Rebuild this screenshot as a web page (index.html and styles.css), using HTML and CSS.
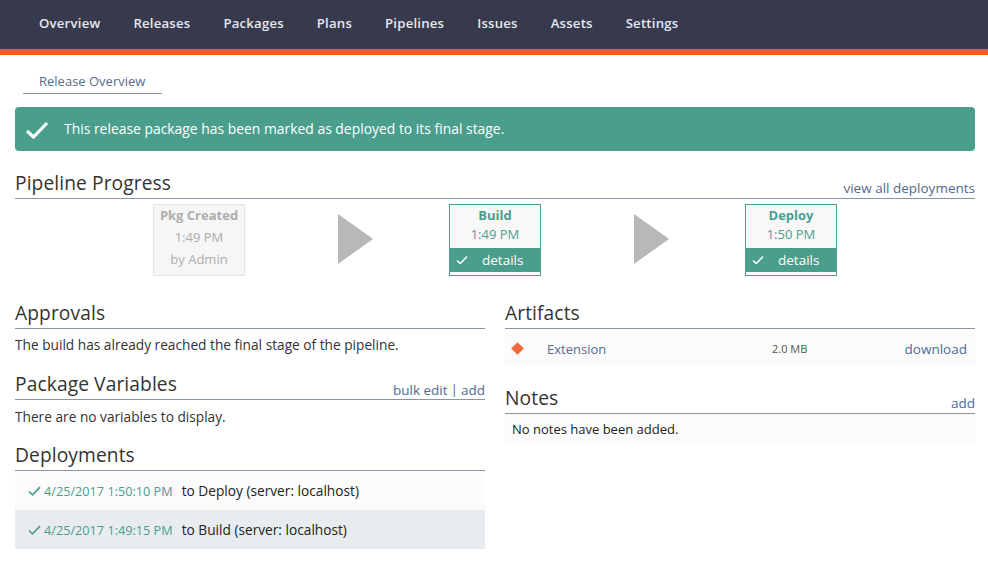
FILE: index.html
```html
<!DOCTYPE html>
<html>
<head>
<meta charset="utf-8">
<link rel="stylesheet" href="styles.css">
</head>
<body>
<header class="topnav">
  <nav class="navlinks">
    <a>Overview</a><a>Releases</a><a>Packages</a><a>Plans</a><a>Pipelines</a><a>Issues</a><a>Assets</a><a>Settings</a>
  </nav>
</header>
<div class="accent"></div>
<main class="page">
  <div class="tabs"><span class="tab">Release Overview</span></div>
  <div class="alert">
    <svg class="alert-check" width="24" height="20" viewBox="0 0 24 20"><path d="M2 11 L8.5 17 L22 3" fill="none" stroke="#fff" stroke-width="3.2"/></svg>
    <span>This release package has been marked as deployed to its final stage.</span>
  </div>

  <section class="sec">
    <div class="sec-head"><h2>Pipeline Progress</h2><a class="link">view all deployments</a></div>
    <div class="pipeline">
      <div class="stage stage-off">
        <div class="st-title">Pkg Created</div>
        <div class="st-line">1:49 PM</div>
        <div class="st-line">by Admin</div>
      </div>
      <div class="arrow"></div>
      <div class="stage stage-on">
        <div class="st-title">Build</div>
        <div class="st-time">1:49 PM</div>
        <div class="st-details"><svg width="12" height="10" viewBox="0 0 12 10"><path d="M1 5.5 L4.3 8.5 L11 1.5" fill="none" stroke="#fff" stroke-width="1.6"/></svg><span>details</span></div>
      </div>
      <div class="arrow"></div>
      <div class="stage stage-on">
        <div class="st-title">Deploy</div>
        <div class="st-time">1:50 PM</div>
        <div class="st-details"><svg width="12" height="10" viewBox="0 0 12 10"><path d="M1 5.5 L4.3 8.5 L11 1.5" fill="none" stroke="#fff" stroke-width="1.6"/></svg><span>details</span></div>
      </div>
    </div>
  </section>

  <div class="cols">
    <div class="col">
      <section class="sec">
        <div class="sec-head"><h2>Approvals</h2></div>
        <p class="msg">The build has already reached the final stage of the pipeline.</p>
      </section>
      <section class="sec">
        <div class="sec-head"><h2>Package Variables</h2><span class="links"><a class="link">bulk edit</a><span class="sep">|</span><a class="link">add</a></span></div>
        <p class="msg">There are no variables to display.</p>
      </section>
      <section class="sec">
        <div class="sec-head"><h2>Deployments</h2></div>
        <div class="deploy-row">
          <svg width="13" height="10" viewBox="0 0 13 10"><path d="M1 5.5 L4.5 8.8 L12 1.2" fill="none" stroke="#4a9e8c" stroke-width="1.7"/></svg>
          <span class="dep-date">4/25/2017 1:50:10 PM</span><span class="dep-text">to Deploy (server: localhost)</span>
        </div>
        <div class="deploy-row alt">
          <svg width="13" height="10" viewBox="0 0 13 10"><path d="M1 5.5 L4.5 8.8 L12 1.2" fill="none" stroke="#4a9e8c" stroke-width="1.7"/></svg>
          <span class="dep-date">4/25/2017 1:49:15 PM</span><span class="dep-text">to Build (server: localhost)</span>
        </div>
      </section>
    </div>
    <div class="col">
      <section class="sec">
        <div class="sec-head"><h2>Artifacts</h2></div>
        <div class="artifact">
          <span class="diamond"></span>
          <span class="art-name">Extension</span>
          <span class="art-size">2.0 MB</span>
          <a class="link art-dl">download</a>
        </div>
      </section>
      <section class="sec notes">
        <div class="sec-head"><h2>Notes</h2><a class="link">add</a></div>
        <div class="note-row">No notes have been added.</div>
      </section>
    </div>
  </div>
</main>
</body>
</html>
```
FILE: styles.css
```css
* { box-sizing: border-box; }
html, body { margin: 0; padding: 0; background: #fff; }
body { font-family: "Open Sans", "Liberation Sans", sans-serif; color: #333; font-size: 13px; }
a { cursor: pointer; }

.topnav { height: 49px; background: #373a4d; display: flex; align-items: center; padding-bottom: 4px; }
.navlinks { display: flex; padding-left: 39px; }
.navlinks a { color: #e4e8f0; font-size: 13.2px; font-weight: 600; margin-right: 33px; letter-spacing: 0.2px; }
.accent { height: 6px; background: #f15a29; }

.page { padding: 0 13px 0 15px; }
.tabs { padding: 17px 0 0 8px; }
.tab { display: inline-block; color: #5a6a8a; font-size: 13px; padding: 0 17px 3px 16px; border-bottom: 1px solid #8a93a0; line-height: 18px; }

.alert { margin-top: 13px; height: 44px; background: #4a9e8c; border-radius: 4px; display: flex; align-items: center; color: #fff; font-size: 13.9px; padding-left: 10px; padding-bottom: 2px; }
.alert-check { margin-right: 15px; margin-top: 4px; }

.sec-head { display: flex; align-items: flex-end; justify-content: space-between; border-bottom: 1px solid #8896a3; height: 30px; padding-bottom: 3px; }
.sec-head h2 { margin: 0; font-size: 19.2px; font-weight: 400; color: #333; line-height: 24px; letter-spacing: 0.1px; }
.sec-head .link, .sec-head .links { margin-bottom: -1px; }
.link { color: #4e6b95; font-size: 13.5px; line-height: 16px; }
.links { display: flex; align-items: flex-end; }
.sep { color: #4e6b95; margin: 0 3px; font-size: 13.5px; line-height: 16px; }

.page > .sec { margin-top: 18px; }

.pipeline { display: flex; justify-content: center; align-items: flex-start; padding-top: 5px; height: 100px; }
.stage { width: 92px; height: 72px; text-align: center; }
.stage-off { background: #f6f6f6; border: 1px solid #e4e4e4; color: #adadad; }
.stage-off .st-title { font-weight: 700; font-size: 13px; line-height: 21px; }
.stage-off .st-line { font-size: 13px; line-height: 22px; }
.stage-on { background: #f8f8f8; border: 1px solid #4a9e8c; color: #4a9e8c; display: flex; flex-direction: column; padding-top: 1px; }
.stage-on .st-title { font-weight: 700; font-size: 13px; line-height: 18px; }
.stage-on .st-time { font-size: 13px; line-height: 20px; height: 24px; }
.st-details { background: #4a9e8c; color: #fff; height: 24px; flex: none; display: flex; align-items: center; padding-left: 6px; padding-bottom: 1px; font-size: 13.5px; }
.st-details svg { margin-right: 14px; }
.stage-on::after { content: ""; display: block; height: 3px; flex: none; background: #fff; }
.arrow { width: 0; height: 0; border-top: 25px solid transparent; border-bottom: 25px solid transparent; border-left: 35px solid #b8b8b8; margin: 10px 76px 0 93px; }

.cols { display: flex; gap: 20px; }
.col { flex: 1; min-width: 0; }
.msg { margin: 0; padding: 8px 0 0 0; font-size: 13.7px; line-height: 16px; color: #333; height: 27px; }
.col .sec + .sec { margin-top: 14px; }
.col .sec + .sec .msg { padding-top: 9px; }

.deploy-row { display: flex; align-items: center; height: 39px; padding-left: 13px; background: #fbfbfb; }
.deploy-row.alt { background: #e8ecee; }
.deploy-row svg { margin-right: 3px; }
.dep-date { color: #4a9e8c; margin-right: 9px; font-size: 12.7px; }
.dep-text { color: #222; font-size: 13.7px; }

.artifact { display: flex; align-items: center; height: 34px; margin-top: 3px; background: #fbfbfb; padding-left: 8px; padding-right: 8px; padding-bottom: 1px; }
.diamond { width: 9px; height: 9px; background: #f26a3c; transform: rotate(45deg); margin: 0 25px 0 0; }
.art-name { color: #5a6a85; font-size: 13px; width: 225px; }
.art-size { color: #555; font-size: 11px; }
.art-dl { margin-left: auto; }
.col .sec.notes { margin-top: 18px; }
.note-row { background: #fbfbfb; height: 30px; padding: 6px 0 0 7px; font-size: 13px; color: #222; }
```
